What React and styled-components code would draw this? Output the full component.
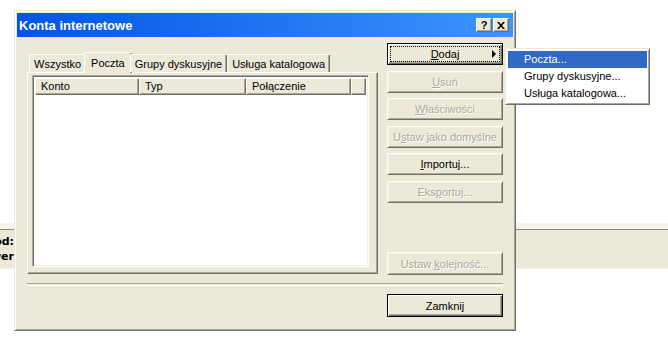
import React from 'react'
import styled, { createGlobalStyle } from 'styled-components'

const GlobalStyle = createGlobalStyle`
  html, body {
    margin: 0;
    padding: 0;
    background: #ffffff;
  }
  body {
    font-family: 'Liberation Sans', Arial, sans-serif;
    font-size: 11px;
    color: #000000;
  }
`

const FACE = '#ece9d8'
const SHADOW = '#aca899'
const DARK = '#716f64'
const LIGHT = '#f1efe2'

const Desktop = styled.div`
  position: relative;
  width: 668px;
  height: 361px;
  overflow: hidden;
  background: #ffffff;
`

const BackStrip = styled.div`
  margin-top: 223px;
  height: 6px;
  background: #f6f4ec;
`

const BackBar = styled.div`
  height: 38px;
  border-top: 1px solid #8f8d80;
  border-bottom: 1px solid #f6f4ec;
  background: ${FACE};
  display: flex;
`

const BackLabels = styled.div`
  width: 54px;
  margin-left: -40px;
  padding-top: 4px;
  text-align: right;
  font-family: 'DejaVu Sans', sans-serif;
  font-weight: bold;
  font-size: 11px;
  line-height: 15px;
`

const Dialog = styled.div`
  position: absolute;
  left: 14px;
  top: 10px;
  width: 502px;
  height: 321px;
  box-sizing: border-box;
  background: ${FACE};
  border: 1px solid;
  border-color: ${FACE} ${DARK} ${DARK} ${FACE};
  box-shadow: inset 1px 1px #ffffff, inset -1px -1px ${SHADOW};
  padding: 2px;
  display: flex;
  flex-direction: column;
`

const TitleBar = styled.div`
  height: 24px;
  flex: none;
  background: linear-gradient(to right, #0054e3, #3d95ff);
  display: flex;
  align-items: center;
  padding: 0 4px 0 2px;
`

const TitleText = styled.div`
  flex: 1;
  color: #ffffff;
  font-weight: bold;
  font-size: 13px;
`

const CaptionButton = styled.div`
  width: 16px;
  height: 14px;
  box-sizing: border-box;
  background: ${FACE};
  border: 1px solid;
  border-color: #ffffff ${DARK} ${DARK} #ffffff;
  box-shadow: inset -1px -1px ${SHADOW};
  display: flex;
  align-items: center;
  justify-content: center;
  font-weight: bold;
  font-size: 11px;
  line-height: 11px;
  margin-left: ${p => p.$gap || 0}px;
`

const Body = styled.div`
  flex: 1;
  padding: 6px 10px 0 10px;
  display: flex;
  flex-direction: column;
`

const TopGrid = styled.div`
  display: grid;
  grid-template-columns: 351px 116px;
  column-gap: 9px;
  height: 233px;
`

const TabControl = styled.div`
  margin-top: 8px;
  display: flex;
  flex-direction: column;
  height: 223px;
`

const TabStrip = styled.div`
  height: 21px;
  display: flex;
  align-items: flex-end;
  padding-left: 2px;
  position: relative;
  z-index: 1;
`

const Tab = styled.div`
  box-sizing: border-box;
  height: ${p => (p.$active ? 21 : 18)}px;
  padding: 0 ${p => (p.$active ? 6 : 4)}px;
  margin: 0 ${p => (p.$active ? -2 : 0)}px;
  margin-bottom: ${p => (p.$active ? -1 : 0)}px;
  background: ${FACE};
  border-top: 1px solid #ffffff;
  border-left: 1px solid #ffffff;
  border-right: 1px solid ${DARK};
  box-shadow: inset -1px 0 ${SHADOW};
  border-radius: 2px 2px 0 0;
  display: flex;
  align-items: center;
  padding-top: ${p => (p.$active ? 0 : 1)}px;
  white-space: nowrap;
`

const Panel = styled.div`
  flex: 1;
  box-sizing: border-box;
  border: 1px solid;
  border-color: #ffffff ${DARK} ${DARK} #ffffff;
  box-shadow: inset -1px -1px ${SHADOW};
  padding: 2px 8px 6px 4px;
  display: flex;
`

const ListView = styled.div`
  flex: 1;
  background: #ffffff;
  border: 1px solid;
  border-color: ${SHADOW} #ffffff #ffffff ${SHADOW};
  box-shadow: inset 1px 1px ${DARK}, inset -1px -1px ${LIGHT};
  padding: 2px;
  display: flex;
  flex-direction: column;
`

const Header = styled.div`
  display: flex;
  height: 17px;
`

const HeaderCell = styled.div`
  box-sizing: border-box;
  width: ${p => (p.$width ? `${p.$width}px` : 'auto')};
  flex: ${p => (p.$width ? 'none' : 1)};
  background: ${FACE};
  border: 1px solid;
  border-color: #ffffff ${DARK} ${DARK} #ffffff;
  box-shadow: inset -1px -1px ${SHADOW};
  padding-left: 5px;
  line-height: 14px;
  white-space: nowrap;
`

const ButtonColumn = styled.div`
  display: flex;
  flex-direction: column;
  gap: 5.5px;
`

const Button = styled.div`
  position: relative;
  box-sizing: border-box;
  height: ${p => p.$h || 22}px;
  background: ${FACE};
  border: 1px solid;
  border-color: ${p => (p.$default ? '#000000' : `#ffffff ${DARK} ${DARK} #ffffff`)};
  box-shadow: ${p =>
    p.$default
      ? `inset 1px 1px #ffffff, inset -1px -1px ${DARK}, inset -2px -2px ${SHADOW}`
      : `inset 1px 1px ${LIGHT}, inset -1px -1px ${SHADOW}`};
  display: flex;
  align-items: center;
  justify-content: center;
  color: ${p => (p.$disabled ? SHADOW : '#000000')};
  text-shadow: ${p => (p.$disabled ? '1px 1px #ffffff' : 'none')};
  margin-top: ${p => p.$push || 0}px;
  white-space: nowrap;
`

const FocusRect = styled.div`
  position: absolute;
  inset: 2px;
  border: 1px dotted #000000;
`

const Arrow = styled.div`
  position: absolute;
  right: 6px;
  top: 6px;
  width: 0;
  height: 0;
  border-top: 4px solid transparent;
  border-bottom: 4px solid transparent;
  border-left: 4px solid #000000;
`

const Separator = styled.div`
  margin-top: 7px;
  height: 1px;
  border-top: 1px solid ${SHADOW};
  border-bottom: 1px solid #ffffff;
`

const BottomRow = styled.div`
  margin-top: 8px;
  display: flex;
  justify-content: flex-end;
`

const BottomButton = styled(Button)`
  width: 116px;
`

const Menu = styled.div`
  position: absolute;
  left: 505px;
  top: 48px;
  width: 145px;
  box-sizing: border-box;
  background: #ffffff;
  border: 1px solid;
  border-color: ${FACE} ${DARK} ${DARK} ${FACE};
  box-shadow: inset 1px 1px #ffffff, inset -1px -1px ${SHADOW};
  padding: 2px;
`

const MenuItem = styled.div`
  height: 17px;
  line-height: 17px;
  padding-left: 16px;
  background: ${p => (p.$active ? '#316ac5' : 'transparent')};
  color: ${p => (p.$active ? '#ffffff' : '#000000')};
  white-space: nowrap;
`

const CloseGlyph = () => (
  <svg width='8' height='7' viewBox='0 0 8 7'>
    <path d='M0 0h2l2 2.2L6 0h2L5 3.5 8 7H6L4 4.8 2 7H0l3-3.5z' fill='#000' />
  </svg>
)

const App = () => {
  return (
    <Desktop>
      <GlobalStyle />
      <BackStrip />
      <BackBar>
        <BackLabels>
          <div>Kod:</div>
          <div>Serwer</div>
        </BackLabels>
      </BackBar>

      <Dialog>
        <TitleBar>
          <TitleText>Konta internetowe</TitleText>
          <CaptionButton>?</CaptionButton>
          <CaptionButton $gap={1}>
            <CloseGlyph />
          </CaptionButton>
        </TitleBar>
        <Body>
          <TopGrid>
            <TabControl>
              <TabStrip>
                <Tab>Wszystko</Tab>
                <Tab $active>Poczta</Tab>
                <Tab>Grupy dyskusyjne</Tab>
                <Tab>Usługa katalogowa</Tab>
              </TabStrip>
              <Panel>
                <ListView>
                  <Header>
                    <HeaderCell $width={104}>Konto</HeaderCell>
                    <HeaderCell $width={107}>Typ</HeaderCell>
                    <HeaderCell $width={105}>Połączenie</HeaderCell>
                    <HeaderCell />
                  </Header>
                </ListView>
              </Panel>
            </TabControl>
            <ButtonColumn>
              <Button $default>
                <FocusRect />
                <span><u>D</u>odaj</span>
                <Arrow />
              </Button>
              <Button $disabled><span><u>U</u>suń</span></Button>
              <Button $disabled><span><u>W</u>łaściwości</span></Button>
              <Button $disabled><span>U<u>s</u>taw jako domyślne</span></Button>
              <Button><span><u>I</u>mportuj...</span></Button>
              <Button $disabled><span>Eks<u>p</u>ortuj...</span></Button>
              <Button $disabled $h={23} $push={44}>
                <span>Ustaw <u>k</u>olejność...</span>
              </Button>
            </ButtonColumn>
          </TopGrid>
          <Separator />
          <BottomRow>
            <BottomButton $default $h={23}>Zamknij</BottomButton>
          </BottomRow>
        </Body>
      </Dialog>

      <Menu>
        <MenuItem $active>Poczta...</MenuItem>
        <MenuItem>Grupy dyskusyjne...</MenuItem>
        <MenuItem>Usługa katalogowa...</MenuItem>
      </Menu>
    </Desktop>
  )
}

export default App
